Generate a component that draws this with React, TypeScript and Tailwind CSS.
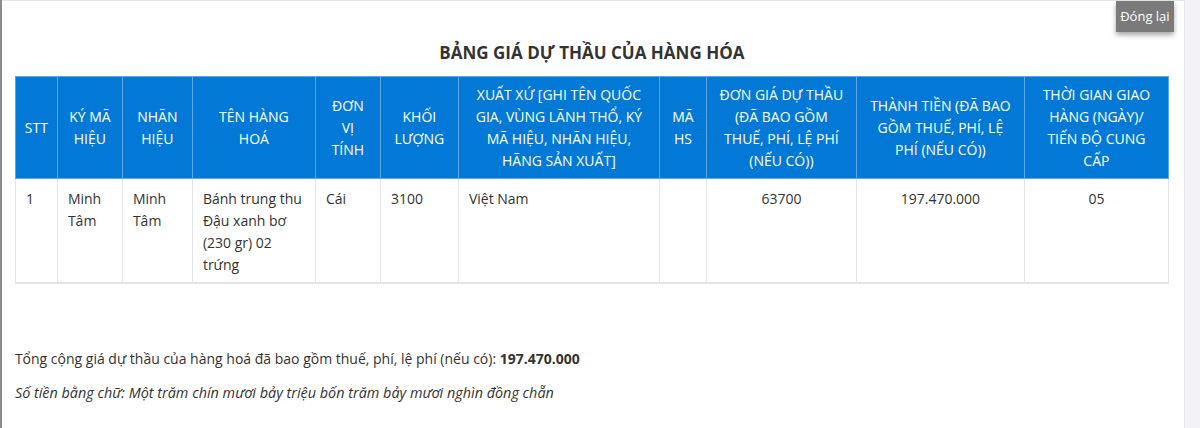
const headers: string[][] = [
  ["STT"],
  ["KÝ MÃ", "HIỆU"],
  ["NHÃN", "HIỆU"],
  ["TÊN HÀNG", "HOÁ"],
  ["ĐƠN", "VỊ", "TÍNH"],
  ["KHỐI", "LƯỢNG"],
  ["XUẤT XỨ [GHI TÊN QUỐC", "GIA, VÙNG LÃNH THỔ, KÝ", "MÃ HIỆU, NHÃN HIỆU,", "HÃNG SẢN XUẤT]"],
  ["MÃ", "HS"],
  ["ĐƠN GIÁ DỰ THẦU", "(ĐÃ BAO GỒM", "THUẾ, PHÍ, LỆ PHÍ", "(NẾU CÓ))"],
  ["THÀNH TIỀN (ĐÃ BAO", "GỒM THUẾ, PHÍ, LỆ", "PHÍ (NẾU CÓ))"],
  ["THỜI GIAN GIAO", "HÀNG (NGÀY)/", "TIẾN ĐỘ CUNG", "CẤP"],
];

const widths = [42, 65, 70, 123, 65, 78, 201, 47, 150, 168, 144];

const row: { lines: string[]; center?: boolean }[] = [
  { lines: ["1"] },
  { lines: ["Minh", "Tâm"] },
  { lines: ["Minh", "Tâm"] },
  { lines: ["Bánh trung thu", "Đậu xanh bơ", "(230 gr) 02", "trứng"] },
  { lines: ["Cái"] },
  { lines: ["3100"] },
  { lines: ["Việt Nam"] },
  { lines: [] },
  { lines: ["63700"], center: true },
  { lines: ["197.470.000"], center: true },
  { lines: ["05"], center: true },
];

const App = () => (
  <div className="flex h-[428px] w-[1200px] overflow-hidden bg-white font-['Open_Sans',sans-serif] text-[#333]">
    {/* left edge */}
    <div className="w-[2px] bg-[#8c8c8c]" />

    {/* dialog body */}
    <div className="relative flex-1 border-t border-[#e6e6e6] pl-[13px] pr-[15px]">
      <button className="absolute right-[10px] top-0 h-[31px] w-[58px] bg-[#7a7a7a] text-[13px] text-white shadow-[0_3px_5px_rgba(0,0,0,0.35)]">
        Đóng lại
      </button>

      <h2 className="pt-[40px] pb-[11px] text-center text-[17px] font-bold leading-[24px] text-[#333]">
        BẢNG GIÁ DỰ THẦU CỦA HÀNG HÓA
      </h2>

      <table className="w-[1153px] table-fixed border-collapse">
        <colgroup>
          {widths.map((w, i) => (
            <col key={i} style={{ width: w }} />
          ))}
        </colgroup>
        <thead>
          <tr className="bg-[#0379d7]">
            {headers.map((h, i) => (
              <th
                key={i}
                className="border border-[#5aa6e6] px-[4px] pt-[7px] pb-[6px] text-center align-middle text-[14px] font-normal leading-[22px] text-white"
              >
                {h.map((l, j) => (
                  <div key={j} className="whitespace-nowrap">{l}</div>
                ))}
              </th>
            ))}
          </tr>
        </thead>
        <tbody>
          <tr>
            {row.map((c, i) => (
              <td
                key={i}
                className={`border-x border-b-2 border-[#e4e3e8] px-[10px] pt-[9px] pb-[6px] align-top text-[14px] leading-[22px] ${c.center ? "text-center" : "text-left"}`}
              >
                {c.lines.map((l, j) => (
                  <div key={j} className="whitespace-nowrap">{l}</div>
                ))}
                {c.lines.length === 0 && <div>&nbsp;</div>}
              </td>
            ))}
          </tr>
        </tbody>
      </table>

      <p className="mt-[64px] text-[14px] leading-[22px]">
        Tổng cộng giá dự thầu của hàng hoá đã bao gồm thuế, phí, lệ phí (nếu có):{" "}
        <span className="font-bold">197.470.000</span>
      </p>
      <p className="mt-[12px] text-[14.4px] italic leading-[22px]">
        Số tiền bằng chữ: Một trăm chín mươi bảy triệu bốn trăm bảy mươi nghìn đồng chẵn
      </p>
    </div>

    {/* right strip */}
    <div className="w-[17px] border-l border-[#e8e7ec] bg-[#f3f2f5]" />
  </div>
);

export default App;
